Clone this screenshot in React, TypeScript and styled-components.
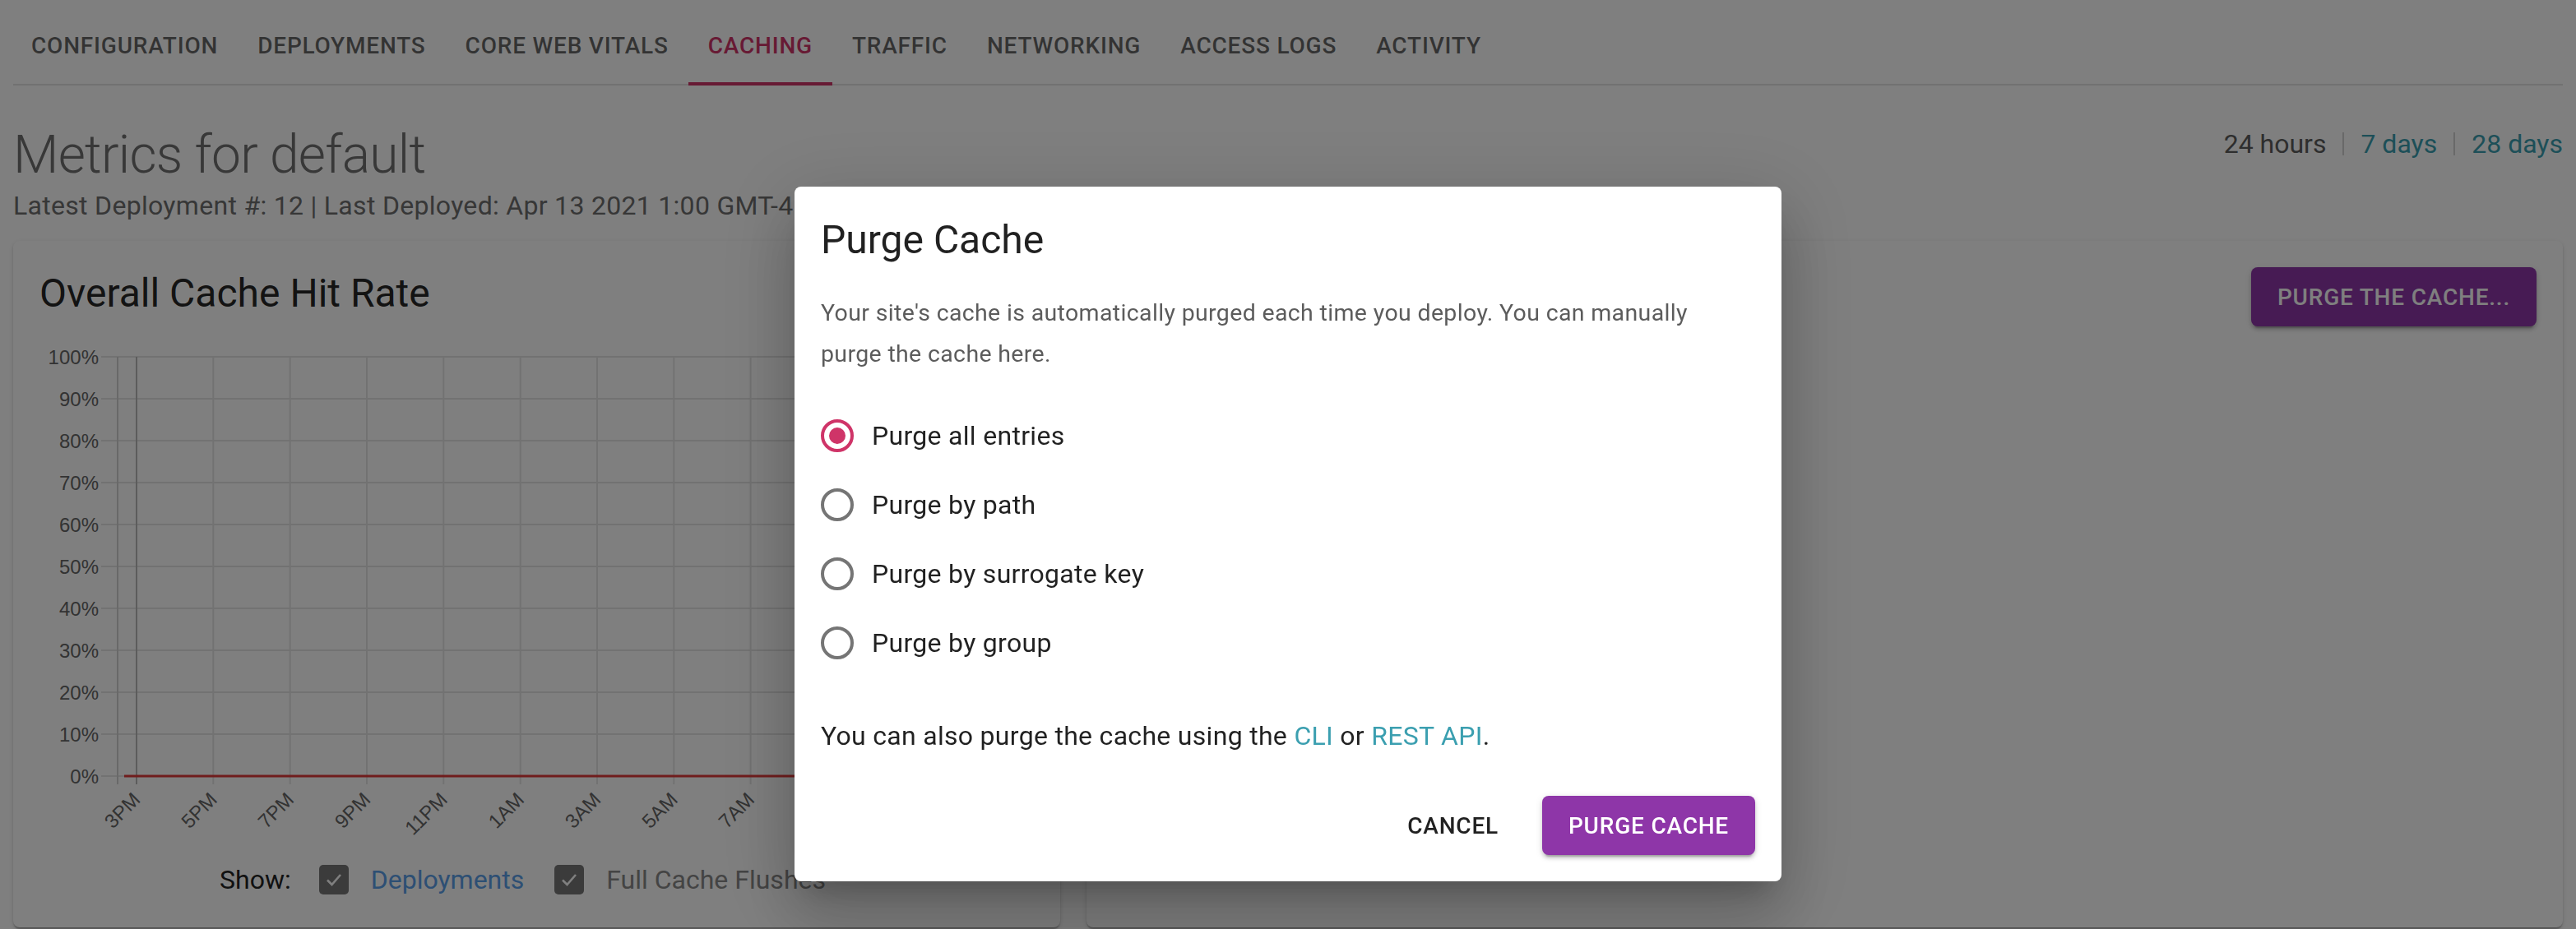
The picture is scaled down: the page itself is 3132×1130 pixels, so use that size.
import React from "react";
import styled, { createGlobalStyle } from "styled-components";

const Global = createGlobalStyle`
  html, body { margin: 0; padding: 0; overflow: hidden; background: #ffffff; }
  body { font-family: Roboto, "Noto Sans", Arial, sans-serif; }
  * { box-sizing: border-box; }
`;

const PRIMARY = "#cf3468";
const PURPLE = "#8e36a8";
const LINK = "#3b9fb0";

const Page = styled.div`
  padding: 8px 16px 0;
  height: 1130px;
`;

const TabBar = styled.nav`
  display: flex;
  border-bottom: 2px solid #e2e2e2;
`;

const Tab = styled.div<{ $active?: boolean }>`
  position: relative;
  height: 94px;
  padding: 0 24px;
  display: flex;
  align-items: center;
  font-size: 28px;
  font-weight: 500;
  letter-spacing: 0.8px;
  text-transform: uppercase;
  color: ${(p) => (p.$active ? PRIMARY : "rgba(0,0,0,0.6)")};
  &:first-child {
    margin-left: -2px;
  }
  &::after {
    content: "";
    position: absolute;
    left: 0;
    right: 0;
    bottom: -2px;
    height: 4px;
    background: ${(p) => (p.$active ? PRIMARY : "transparent")};
  }
`;

const Header = styled.header`
  display: flex;
  justify-content: space-between;
  align-items: flex-start;
  margin-top: 46px;
`;

const TitleBlock = styled.div`
  display: flex;
  flex-direction: column;
`;

const PageTitle = styled.h1`
  margin: 0;
  font-size: 64px;
  line-height: 78px;
  letter-spacing: -0.7px;
  font-weight: 300;
  color: #707070;
`;

const SubTitle = styled.div`
  font-size: 32px;
  line-height: 44px;
  letter-spacing: 0.3px;
  color: #6e6e6e;
`;

const Range = styled.div`
  display: flex;
  align-items: center;
  gap: 20px;
  margin-top: 3px;
  font-size: 32px;
  line-height: 44px;
`;

const RangeItem = styled.span<{ $link?: boolean }>`
  color: ${(p) => (p.$link ? LINK : "#5c5c5c")};
  cursor: ${(p) => (p.$link ? "pointer" : "default")};
`;

const RangeSep = styled.span`
  width: 2px;
  height: 28px;
  background: #d2d2d2;
`;

const Grid = styled.div`
  display: flex;
  margin: 21px -16px 0;
`;

const GridItem = styled.div<{ $span: number }>`
  flex: 0 0 ${(p) => (p.$span / 12) * 100}%;
  padding: 0 16px;
`;

const Card = styled.section`
  height: 835px;
  background: #ffffff;
  border-radius: 8px;
  padding: 32px;
  box-shadow: 0 4px 2px -2px rgba(0, 0, 0, 0.2), 0 2px 2px rgba(0, 0, 0, 0.14),
    0 2px 6px rgba(0, 0, 0, 0.12);
`;

const ChartCard = styled(Card)`
  display: flex;
  flex-direction: column;
`;

const ActionCard = styled(Card)`
  display: flex;
  justify-content: flex-end;
  align-items: flex-start;
`;

const CardTitle = styled.h2`
  margin: 0;
  font-size: 48px;
  line-height: 64px;
  font-weight: 400;
  color: rgba(0, 0, 0, 0.87);
`;

const ChartSvg = styled.svg`
  display: block;
  flex: none;
`;

const Legend = styled.div`
  display: flex;
  align-items: center;
  justify-content: center;
  height: 52px;
  padding-right: 34px;
  font-size: 32px;
`;

const ShowLabel = styled.span`
  color: #222;
  margin-right: 34px;
`;

const LegendLabel = styled.span<{ $color: string; $after: number }>`
  color: ${(p) => p.$color};
  margin-left: 27px;
  margin-right: ${(p) => p.$after}px;
`;

const Check = styled.span`
  width: 36px;
  height: 36px;
  border-radius: 5px;
  background: #767676;
  display: flex;
  align-items: center;
  justify-content: center;
`;

const Button = styled.button`
  height: 72px;
  padding: 0 32px;
  border: none;
  border-radius: 8px;
  font-family: Roboto, "Noto Sans", Arial, sans-serif;
  font-size: 28px;
  font-weight: 500;
  letter-spacing: 0.8px;
  text-transform: uppercase;
  cursor: pointer;
`;

const ContainedButton = styled(Button)`
  background: ${PURPLE};
  color: #ffffff;
  box-shadow: 0 6px 2px -4px rgba(0, 0, 0, 0.2), 0 4px 4px rgba(0, 0, 0, 0.14),
    0 2px 10px rgba(0, 0, 0, 0.12);
`;

const TextButton = styled(Button)`
  background: transparent;
  color: rgba(0, 0, 0, 0.87);
  padding: 0 16px;
`;

const Backdrop = styled.div`
  position: fixed;
  inset: 0;
  background: rgba(0, 0, 0, 0.5);
  display: flex;
  justify-content: center;
  align-items: flex-start;
  padding-top: 227px;
`;

const Dialog = styled.div`
  width: 1200px;
  background: #ffffff;
  border-radius: 8px;
  padding: 33px 32px 32px;
  box-shadow: 0 22px 30px -14px rgba(0, 0, 0, 0.2), 0 48px 76px 6px rgba(0, 0, 0, 0.14),
    0 18px 92px 16px rgba(0, 0, 0, 0.12);
`;

const DialogTitle = styled.h2`
  margin: 0;
  font-size: 48px;
  line-height: 64px;
  font-weight: 400;
  color: rgba(0, 0, 0, 0.87);
`;

const DialogText = styled.p`
  margin: 32px 0 0;
  max-width: 1110px;
  font-size: 28.5px;
  line-height: 50px;
  letter-spacing: 0.35px;
  color: #5c5c5c;
`;

const RadioGroup = styled.div`
  margin-top: 32px;
  display: flex;
  flex-direction: column;
`;

const RadioRow = styled.label`
  height: 84px;
  display: flex;
  align-items: center;
  gap: 22px;
  font-size: 32px;
  letter-spacing: 0.3px;
  color: rgba(0, 0, 0, 0.87);
  cursor: pointer;
`;

const RadioRing = styled.span<{ $checked?: boolean }>`
  width: 40px;
  height: 40px;
  border-radius: 50%;
  border: 4px solid ${(p) => (p.$checked ? PRIMARY : "#757575")};
  display: flex;
  align-items: center;
  justify-content: center;
  &::after {
    content: "";
    width: 20px;
    height: 20px;
    border-radius: 50%;
    background: ${(p) => (p.$checked ? PRIMARY : "transparent")};
  }
`;

const FooterText = styled.p`
  margin: 47px 0 0;
  font-size: 32px;
  line-height: 48px;
  letter-spacing: 0.3px;
  color: rgba(0, 0, 0, 0.87);
`;

const Link = styled.a`
  color: ${LINK};
  text-decoration: none;
`;

const Actions = styled.div`
  display: flex;
  justify-content: flex-end;
  align-items: center;
  gap: 37px;
  margin-top: 49px;
`;

const tabs = [
  "Configuration",
  "Deployments",
  "Core Web Vitals",
  "Caching",
  "Traffic",
  "Networking",
  "Access Logs",
  "Activity",
];

const xLabels = ["3PM", "5PM", "7PM", "9PM", "11PM", "1AM", "3AM", "5AM", "7AM", "9AM", "11AM", "1PM"];

const Chart: React.FC = () => {
  const top = 45;
  const step = 51;
  const zeroY = top + step * 10;
  const firstX = 118;
  const dx = 93.33;
  const right = 1195;
  return (
    <ChartSvg width={1209} height={655}>
      {Array.from({ length: 11 }).map((_, i) => {
        const y = top + step * i;
        return (
          <g key={i}>
            <line x1={75} x2={right} y1={y} y2={y} stroke="#e4e4e4" strokeWidth={2} />
            <text
              x={72}
              y={y}
              textAnchor="end"
              dominantBaseline="central"
              fontFamily='"Liberation Sans", Arial, sans-serif'
              fontSize={24}
              fill="#666"
            >
              {100 - i * 10}%
            </text>
          </g>
        );
      })}
      <line x1={95} x2={95} y1={top} y2={zeroY + 10} stroke="#d2d2d2" strokeWidth={2} />
      {xLabels.map((l, k) => {
        const x = firstX + dx * k;
        return (
          <g key={l}>
            <line
              x1={x}
              x2={x}
              y1={top}
              y2={zeroY + 10}
              stroke={k === 0 ? "#b8b8b8" : "#e4e4e4"}
              strokeWidth={2}
            />
            <text
              x={x}
              y={zeroY + 24}
              textAnchor="end"
              dominantBaseline="central"
              transform={`rotate(-45 ${x} ${zeroY + 24})`}
              fontFamily='"Liberation Sans", Arial, sans-serif'
              fontSize={24}
              fill="#666"
            >
              {l}
            </text>
          </g>
        );
      })}
      <line x1={103} x2={right} y1={zeroY} y2={zeroY} stroke="#e03a3a" strokeWidth={3} />
    </ChartSvg>
  );
};

const CheckIcon = () => (
  <svg width="26" height="26" viewBox="0 0 26 26">
    <path d="M5 13.5 L10.5 19 L21 7" fill="none" stroke="#ffffff" strokeWidth={2.6} />
  </svg>
);

const options = ["Purge all entries", "Purge by path", "Purge by surrogate key", "Purge by group"];

export default function App() {
  return (
    <>
      <Global />
      <Page>
        <TabBar>
          {tabs.map((t) => (
            <Tab key={t} $active={t === "Caching"}>
              {t}
            </Tab>
          ))}
        </TabBar>
        <Header>
          <TitleBlock>
            <PageTitle>Metrics for default</PageTitle>
            <SubTitle>Latest Deployment #: 12 | Last Deployed: Apr 13 2021 1:00 GMT-4</SubTitle>
          </TitleBlock>
          <Range>
            <RangeItem>24 hours</RangeItem>
            <RangeSep />
            <RangeItem $link>7 days</RangeItem>
            <RangeSep />
            <RangeItem $link>28 days</RangeItem>
          </Range>
        </Header>
        <Grid>
          <GridItem $span={5}>
            <ChartCard>
              <CardTitle>Overall Cache Hit Rate</CardTitle>
              <Chart />
              <Legend>
                <ShowLabel>Show:</ShowLabel>
                <Check>
                  <CheckIcon />
                </Check>
                <LegendLabel $color="#5b9ee8" $after={37}>
                  Deployments
                </LegendLabel>
                <Check>
                  <CheckIcon />
                </Check>
                <LegendLabel $color="#888888" $after={0}>
                  Full Cache Flushes
                </LegendLabel>
              </Legend>
            </ChartCard>
          </GridItem>
          <GridItem $span={7}>
            <ActionCard>
              <ContainedButton>Purge the cache...</ContainedButton>
            </ActionCard>
          </GridItem>
        </Grid>
      </Page>
      <Backdrop>
        <Dialog>
          <DialogTitle>Purge Cache</DialogTitle>
          <DialogText>
            Your site's cache is automatically purged each time you deploy. You can manually purge the
            cache here.
          </DialogText>
          <RadioGroup>
            {options.map((o, i) => (
              <RadioRow key={o}>
                <RadioRing $checked={i === 0} />
                {o}
              </RadioRow>
            ))}
          </RadioGroup>
          <FooterText>
            You can also purge the cache using the <Link>CLI</Link> or <Link>REST API</Link>.
          </FooterText>
          <Actions>
            <TextButton>Cancel</TextButton>
            <ContainedButton>Purge Cache</ContainedButton>
          </Actions>
        </Dialog>
      </Backdrop>
    </>
  );
}
